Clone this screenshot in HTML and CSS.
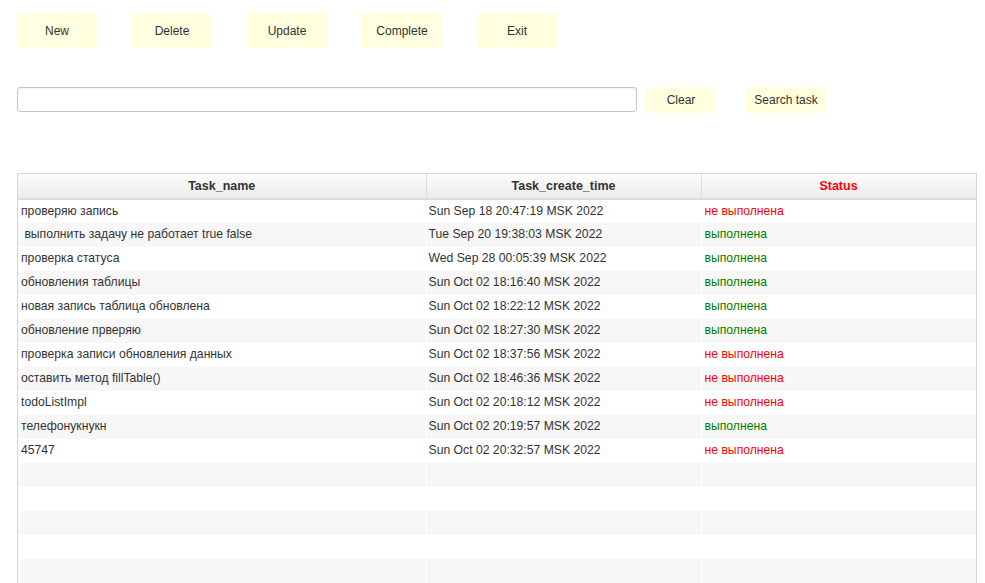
FILE: index.html
```html
<!DOCTYPE html>
<html lang="ru">
<head>
<meta charset="utf-8">
<title>Tasks</title>
<link rel="stylesheet" href="styles.css">
</head>
<body>
<div class="toolbar">
  <button class="btn">New</button>
  <button class="btn">Delete</button>
  <button class="btn">Update</button>
  <button class="btn">Complete</button>
  <button class="btn">Exit</button>
</div>
<div class="search-row">
  <input class="search-input" type="text">
  <button class="btn btn-clear">Clear</button>
  <button class="btn btn-search">Search task</button>
</div>
<div class="table-wrap">
  <table class="grid">
    <colgroup><col class="c1"><col class="c2"><col class="c3"></colgroup>
    <thead>
      <tr><th>Task_name</th><th>Task_create_time</th><th class="st-head">Status</th></tr>
    </thead>
    <tbody>
      <tr><td>проверяю запись</td><td>Sun Sep 18 20:47:19 MSK 2022</td><td class="no">не выполнена</td></tr>
      <tr><td>&nbsp;выполнить задачу не работает true false</td><td>Tue Sep 20 19:38:03 MSK 2022</td><td class="yes">выполнена</td></tr>
      <tr><td>проверка статуса</td><td>Wed Sep 28 00:05:39 MSK 2022</td><td class="yes">выполнена</td></tr>
      <tr><td>обновления таблицы</td><td>Sun Oct 02 18:16:40 MSK 2022</td><td class="yes">выполнена</td></tr>
      <tr><td>новая запись таблица обновлена</td><td>Sun Oct 02 18:22:12 MSK 2022</td><td class="yes">выполнена</td></tr>
      <tr><td>обновление прверяю</td><td>Sun Oct 02 18:27:30 MSK 2022</td><td class="yes">выполнена</td></tr>
      <tr><td>проверка записи обновления данных</td><td>Sun Oct 02 18:37:56 MSK 2022</td><td class="no">не выполнена</td></tr>
      <tr><td>оставить метод fillTable()</td><td>Sun Oct 02 18:46:36 MSK 2022</td><td class="no">не выполнена</td></tr>
      <tr><td>todoListImpl</td><td>Sun Oct 02 20:18:12 MSK 2022</td><td class="no">не выполнена</td></tr>
      <tr><td>телефонукнукн</td><td>Sun Oct 02 20:19:57 MSK 2022</td><td class="yes">выполнена</td></tr>
      <tr><td>45747</td><td>Sun Oct 02 20:32:57 MSK 2022</td><td class="no">не выполнена</td></tr>
      <tr><td></td><td></td><td></td></tr>
      <tr><td></td><td></td><td></td></tr>
      <tr><td></td><td></td><td></td></tr>
      <tr><td></td><td></td><td></td></tr>
      <tr><td></td><td></td><td></td></tr>
    </tbody>
  </table>
</div>
</body>
</html>
```

FILE: styles.css
```css
html, body {
  margin: 0;
  padding: 0;
  background: #ffffff;
  overflow: hidden;
}
body {
  padding: 13px 0 0 17px;
  font-family: "Liberation Sans", Arial, sans-serif;
  font-size: 12px;
  color: #333333;
}
.toolbar {
  display: flex;
  gap: 35px;
}
.btn {
  width: 80px;
  height: 35px;
  border: none;
  border-radius: 3px;
  background: #ffffdf;
  font-family: "Liberation Sans", Arial, sans-serif;
  font-size: 12px;
  color: #333333;
  padding: 0;
}
.search-row {
  display: flex;
  align-items: flex-start;
  margin-top: 39px;
}
.search-input {
  box-sizing: border-box;
  width: 620px;
  height: 25px;
  border: 1px solid #c6c6c6;
  border-radius: 3px;
  background: #ffffff;
  box-shadow: inset 0 1px 2px rgba(0,0,0,0.06);
  padding: 0 4px;
  margin: 0;
}
.btn-clear {
  width: 70px;
  height: 26px;
  margin-left: 9px;
}
.btn-search {
  width: 80px;
  height: 26px;
  margin-left: 30px;
}
.table-wrap {
  margin-top: 60px;
  width: 958px;
  height: 420px;
  border: 1px solid #d6d6d6;
  border-bottom: none;
  overflow: hidden;
}
.grid {
  width: 958px;
  border-collapse: collapse;
  table-layout: fixed;
}
.c1 { width: 408px; }
.c2 { width: 275px; }
.c3 { width: 275px; }
.grid th {
  height: 23px;
  padding: 0 0 1px;
  background: linear-gradient(#fbfbfb, #ececec);
  border-bottom: 2px solid #dcdcdc;
  border-left: 1px solid #dcdcdc;
  font-weight: bold;
  font-size: 12.5px;
  color: #333333;
  text-align: center;
}
.grid th:first-child { border-left: none; }
.grid th.st-head { color: #ff0000; border-right: 1px solid #dcdcdc; }
.grid td {
  height: 24px;
  box-sizing: border-box;
  padding: 0 3px 2px;
  border-left: 1px solid #ffffff;
  white-space: nowrap;
  overflow: hidden;
  font-size: 12.2px;
}
.grid td:first-child { border-left: none; }
.grid td:nth-child(2) { padding-left: 2px; }
.grid tbody tr:nth-child(even) td { background: #f7f7f7; }
.grid td.no { color: #ff0000; }
.grid td.yes { color: #008000; }
```
